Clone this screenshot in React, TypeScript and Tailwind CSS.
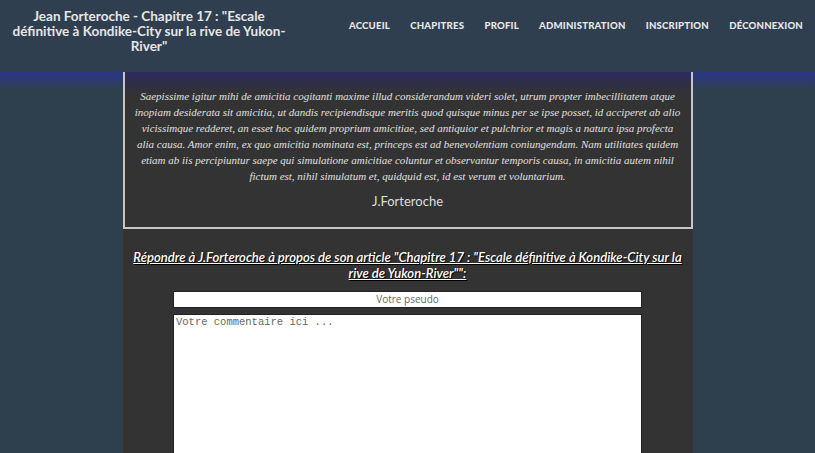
import React from "react";

const futura = "font-['Lato','Open_Sans',sans-serif]";

export default function App() {
  const lines = [
    "Saepissime igitur mihi de amicitia cogitanti maxime illud considerandum videri solet, utrum propter imbecillitatem atque",
    "inopiam desiderata sit amicitia, ut dandis recipiendisque meritis quod quisque minus per se ipse posset, id acciperet ab alio",
    "vicissimque redderet, an esset hoc quidem proprium amicitiae, sed antiquior et pulchrior et magis a natura ipsa profecta",
    "alia causa. Amor enim, ex quo amicitia nominata est, princeps est ad benevolentiam coniungendam. Nam utilitates quidem",
    "etiam ab iis percipiuntur saepe qui simulatione amicitiae coluntur et observantur temporis causa, in amicitia autem nihil",
    "fictum est, nihil simulatum et, quidquid est, id est verum et voluntarium.",
  ];
  const nav = ["ACCUEIL", "CHAPITRES", "PROFIL", "ADMINISTRATION", "INSCRIPTION", "DÉCONNEXION"];
  return (
    <div className="w-[815px] h-[453px] overflow-hidden bg-[#2e3f4e]">
      <header className={`h-[72px] bg-[#2f3f4f] flex items-start ${futura}`}>
        <div className="w-[298px] pt-[9px] text-center text-[#e6e6e6] font-bold text-[13.5px] leading-[15px]">
          Jean Forteroche - Chapitre 17 : "Escale
          <br />
          définitive à Kondike-City sur la rive de Yukon-
          <br />
          River"
        </div>
        <nav className="flex-1 flex justify-between pt-[19px] pl-[51px] pr-[12px] text-[9.6px] font-black text-[#e8e8e8] tracking-[0.2px]">
          {nav.map((n) => (
            <span key={n}>{n}</span>
          ))}
        </nav>
      </header>
      <main className="bg-[linear-gradient(to_bottom,#2b3588_0px,#2c3a72_8px,#2e3f4e_18px)]">
        <div className="w-[570px] mx-auto bg-[linear-gradient(to_bottom,#2c2a66_0px,#2f2e48_10px,#333333_24px)]">
          <section className="border-x-2 border-b-2 border-[#c6c6c6] pt-[16px] pb-[15px] text-center">
            <div className="font-['Liberation_Serif',serif] italic text-[11px] leading-[16px] text-[#e0e0e0]">
              {lines.map((l, i) => (
                <div key={i} className="whitespace-nowrap">{l}</div>
              ))}
            </div>
            <div className={`mt-[8px] text-[13px] text-[#dedede] ${futura}`}>J.Forteroche</div>
          </section>
          <section className="bg-[#333333] pt-[20px] pb-[40px]">
            <h2 className={`text-center italic underline font-semibold text-[13.1px] leading-[16px] text-white [text-shadow:1px_1px_1px_#000] whitespace-nowrap ${futura}`}>
              Répondre à J.Forteroche à propos de son article "Chapitre 17 : "Escale définitive à Kondike-City sur la
              <br />
              rive de Yukon-River"":
            </h2>
            <div className="w-[469px] mx-auto mt-[10px] flex flex-col gap-[6px]">
              <input
                placeholder="Votre pseudo"
                className="h-[17px] w-full bg-white border border-[#222] text-center text-[10px] font-['Open_Sans',sans-serif] placeholder:text-[#666] outline-none"
              />
              <textarea
                placeholder="Votre commentaire ici ..."
                className="h-[160px] w-full bg-white border border-[#222] px-[2px] pt-[1px] text-[10.5px] leading-[12px] font-['Liberation_Mono',monospace] placeholder:text-[#666] resize-none outline-none"
              />
            </div>
          </section>
        </div>
      </main>
    </div>
  );
}
